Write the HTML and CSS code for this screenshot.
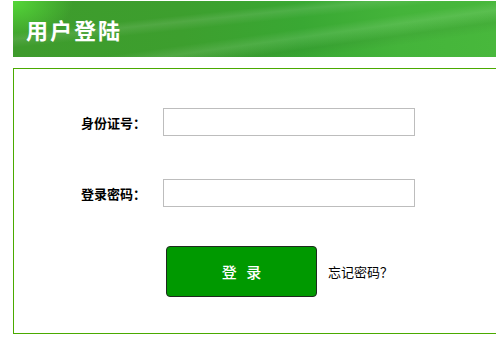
FILE: index.html
```html
<!DOCTYPE html>
<html lang="zh-CN">
<head>
<meta charset="utf-8">
<title>用户登陆</title>
<link rel="stylesheet" href="styles.css">
</head>
<body>
<div class="page">
  <div class="header">
    <h1 class="title">用户登陆</h1>
  </div>
  <div class="panel">
    <div class="row">
      <label class="label" for="idno">身份证号：</label>
      <input class="field" id="idno" type="text">
    </div>
    <div class="row">
      <label class="label" for="pwd">登录密码：</label>
      <input class="field" id="pwd" type="password">
    </div>
    <div class="actions">
      <button class="btn" type="button">登 录</button>
      <a class="forgot" href="#">忘记密码？</a>
    </div>
  </div>
</div>
</body>
</html>
```
FILE: styles.css
```css
html, body {
  margin: 0;
  padding: 0;
  background: #fff;
  overflow: hidden;
}
body {
  font-family: "Noto Sans CJK SC", "Noto Sans", sans-serif;
  color: #000;
}
.page {
  padding: 1px 0 0 13px;
}
.header {
  height: 56px;
  display: flex;
  align-items: center;
  padding-left: 13px;
  background:
    radial-gradient(ellipse 60px 40px at 0 0, rgba(90, 230, 60, 0.8), rgba(90, 230, 60, 0) 100%),
    linear-gradient(174deg, rgba(255,255,255,0) 0 30%, rgba(255,255,255,0.10) 36%, rgba(255,255,255,0) 44%),
    linear-gradient(172deg, rgba(255,255,255,0) 0 55%, rgba(255,255,255,0.10) 62%, rgba(0,0,0,0.05) 72%, rgba(255,255,255,0) 80%),
    linear-gradient(90deg, #3e9b2c 0%, #3d9f2e 35%, #39a833 60%, #44b43a 80%, #48b83c 100%);
}
.title {
  margin: 0;
  font-size: 22px;
  font-weight: 700;
  color: #fff;
  letter-spacing: 2px;
  line-height: 1;
}
.panel {
  margin-top: 11px;
  border-top: 1px solid #4aaa00;
  border-left: 1px solid #4aaa00;
  border-bottom: 1px solid #4aaa00;
  padding: 39px 0 36px 67px;
}
.row {
  display: flex;
  align-items: center;
  margin-bottom: 43px;
}
.row + .row {
  margin-bottom: 39px;
}
.label {
  width: 82px;
  font-size: 13px;
  font-weight: bold;
}
.field {
  box-sizing: border-box;
  width: 252px;
  height: 28px;
  margin: 0;
  border: 1px solid #bdbdbd;
  background: #fff;
  padding: 0 4px;
  outline: none;
}
.actions {
  display: flex;
  align-items: center;
  padding-left: 85px;
}
.btn {
  box-sizing: border-box;
  width: 151px;
  height: 51px;
  margin: 0;
  background: #009900;
  border: 1px solid #1e2a1e;
  border-radius: 4px;
  color: #fff;
  font-family: "Noto Sans CJK SC", sans-serif;
  font-size: 15px;
  font-weight: 500;
  letter-spacing: 3px;
  padding: 0 0 0 3px;
}
.forgot {
  margin-left: 11px;
  font-size: 13px;
  color: #000;
  text-decoration: none;
}
```
